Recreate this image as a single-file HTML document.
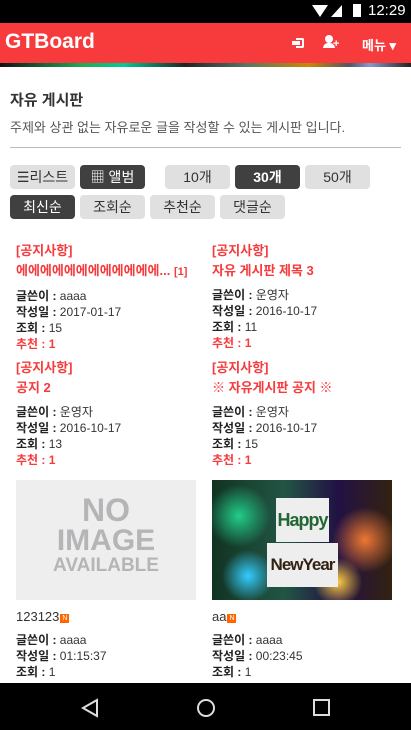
<!DOCTYPE html>
<html><head><meta charset="utf-8"><style>
*{margin:0;padding:0;box-sizing:border-box}
body{width:411px;height:730px;overflow:hidden;background:#fff;font-family:"Liberation Sans","Noto Sans CJK KR",sans-serif;color:#333;position:relative}
.a{position:absolute;white-space:nowrap}
.btn{position:absolute;height:24px;border-radius:4px;background:#e0e0e0;color:#333;font-size:14px;text-align:center;line-height:24px}
.dk{background:#404040;color:#fff}
.m{font-size:12px;line-height:16px;color:#333}
.m b{color:#222}
.red,.m.red{color:#f73a3c;font-weight:bold}
.t{font-size:13px;line-height:20px}
</style></head><body>
<div class="a" style="left:0;top:0;width:411px;height:23px;background:#000"></div>
<div class="a" style="left:312px;top:5px;width:0;height:0;border-left:8px solid transparent;border-right:8px solid transparent;border-top:12px solid #fff"></div>
<div class="a" style="left:331px;top:5px;width:0;height:0;border-left:11px solid transparent;border-bottom:12px solid #fff"></div>
<div class="a" style="left:353px;top:4px;width:8px;height:13px;background:#fff"></div>
<div class="a" style="left:368px;top:2px;color:#fff;font-size:15px">12:29</div>
<div class="a" style="left:0;top:23px;width:411px;height:40px;background:#f73a3c"></div>
<div class="a" style="left:5px;top:30px;color:#fff;font-size:21px;font-weight:bold">GTBoard</div>
<div class="a" style="left:296px;top:38px;width:8px;height:10px;border:2px solid #fff;border-left:none;border-radius:0 2px 2px 0"></div>
<div class="a" style="left:292px;top:41px;width:8px;height:4px;background:#fff"></div>
<div class="a" style="left:325px;top:35px;width:8px;height:8px;border-radius:50%;background:#fff"></div>
<div class="a" style="left:323px;top:43px;width:12px;height:5px;border-radius:5px 5px 0 0;background:#fff"></div>
<div class="a" style="left:333px;top:38px;color:#fff;font-size:11px;font-weight:bold">+</div>
<div class="a" style="left:362px;top:35px;color:#fff;font-size:13px;font-weight:bold">메뉴 ▾</div>
<div class="a" style="left:0;top:63px;width:411px;height:4px;background:linear-gradient(90deg,#111,#2a5 20%,#0c9 30%,#222 45%,#576 60%,#c80 75%,#556 85%,#89c 90%,#222)"></div>
<div class="a" style="left:10px;top:89px;font-size:15px;font-weight:bold;color:#333">자유 게시판</div>
<div class="a" style="left:10px;top:117px;font-size:13px;color:#555">주제와 상관 없는 자유로운 글을 작성할 수 있는 게시판 입니다.</div>
<div class="a" style="left:10px;top:147px;width:391px;height:1px;background:#bbb"></div>
<div class="btn" style="left:10px;top:165px;width:65px">&#9776;리스트</div>
<div class="btn dk" style="left:80px;top:165px;width:65px">&#9638; 앨범</div>
<div class="btn" style="left:165px;top:165px;width:65px">10개</div>
<div class="btn dk" style="left:235px;top:165px;width:65px;font-weight:bold">30개</div>
<div class="btn" style="left:305px;top:165px;width:65px">50개</div>
<div class="btn dk" style="left:10px;top:195px;width:65px">최신순</div>
<div class="btn" style="left:80px;top:195px;width:65px">조회순</div>
<div class="btn" style="left:150px;top:195px;width:65px">추천순</div>
<div class="btn" style="left:220px;top:195px;width:65px">댓글순</div>

<div class="a" style="left:16px;top:241px">
<div class="t red">[공지사항]</div>
<div class="t red">에에에에에에에에에에에에... <span style="font-size:11px">[1]</span></div>
<div style="height:6px"></div>
<div class="m"><b>글쓴이 :</b> aaaa</div><div class="m"><b>작성일 :</b> 2017-01-17</div><div class="m"><b>조회 :</b> 15</div><div class="m red">추천 : 1</div>
</div>
<div class="a" style="left:212px;top:241px">
<div class="t red">[공지사항]</div>
<div class="t red">자유 게시판 제목 3</div>
<div style="height:6px"></div>
<div class="m"><b>글쓴이 :</b> 운영자</div><div class="m"><b>작성일 :</b> 2016-10-17</div><div class="m"><b>조회 :</b> 11</div><div class="m red">추천 : 1</div>
</div>
<div class="a" style="left:16px;top:358px">
<div class="t red">[공지사항]</div>
<div class="t red">공지 2</div>
<div style="height:6px"></div>
<div class="m"><b>글쓴이 :</b> 운영자</div><div class="m"><b>작성일 :</b> 2016-10-17</div><div class="m"><b>조회 :</b> 13</div><div class="m red">추천 : 1</div>
</div>
<div class="a" style="left:212px;top:358px">
<div class="t red">[공지사항]</div>
<div class="t red">※ 자유게시판 공지 ※</div>
<div style="height:6px"></div>
<div class="m"><b>글쓴이 :</b> 운영자</div><div class="m"><b>작성일 :</b> 2016-10-17</div><div class="m"><b>조회 :</b> 15</div><div class="m red">추천 : 1</div>
</div>

<div class="a" style="left:16px;top:480px;width:180px;height:120px;background:#eee;text-align:center;color:#b5b5b8;font-weight:bold;line-height:1">
<div style="font-size:32px;margin-top:14px">NO</div><div style="font-size:30px">IMAGE</div><div style="font-size:19px">AVAILABLE</div></div>
<div class="a" style="left:212px;top:480px;width:180px;height:120px;background:radial-gradient(circle at 15% 30%,#2c8 0,transparent 18%),radial-gradient(circle at 85% 50%,#e73 0,transparent 20%),radial-gradient(circle at 70% 85%,#fc4 0,transparent 15%),radial-gradient(circle at 20% 80%,#3cf 0,transparent 15%),linear-gradient(90deg,#132 0,#254 40%,#214 70%,#321)"></div>
<div class="a" style="left:276px;top:498px;width:53px;height:44px;background:#eee;color:#263;font-weight:bold;font-size:18px;text-align:center;line-height:44px;letter-spacing:-1px">Happy</div>
<div class="a" style="left:267px;top:543px;width:71px;height:44px;background:#eee;color:#321;font-weight:bold;font-size:17px;text-align:center;line-height:44px;letter-spacing:-1px">NewYear</div>

<div class="a" style="left:16px;top:609px;font-size:13px">123123<span style="display:inline-block;width:9px;height:9px;background:#f60;color:#fff;font-size:7px;line-height:9px;text-align:center;margin-left:1px;vertical-align:1px">N</span></div>
<div class="a" style="left:212px;top:609px;font-size:13px">aa<span style="display:inline-block;width:9px;height:9px;background:#f60;color:#fff;font-size:7px;line-height:9px;text-align:center;margin-left:1px;vertical-align:1px">N</span></div>
<div class="a" style="left:16px;top:632px"><div class="m"><b>글쓴이 :</b> aaaa</div><div class="m"><b>작성일 :</b> 01:15:37</div><div class="m"><b>조회 :</b> 1</div></div>
<div class="a" style="left:212px;top:632px"><div class="m"><b>글쓴이 :</b> aaaa</div><div class="m"><b>작성일 :</b> 00:23:45</div><div class="m"><b>조회 :</b> 1</div></div>

<div class="a" style="left:0;top:683px;width:411px;height:47px;background:#000"></div>
<svg class="a" style="left:0;top:683px" width="411" height="47"><g fill="none" stroke="#ddd" stroke-width="2"><path d="M97 17 L83 25 L97 33 Z"/><circle cx="206" cy="25" r="8"/><rect x="314" y="17" width="15" height="15"/></g></svg>
</body></html>
